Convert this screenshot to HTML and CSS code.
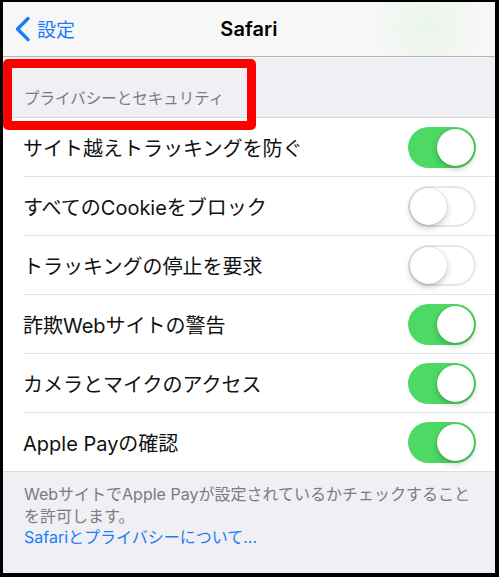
FILE: index.html
```html
<!DOCTYPE html>
<html lang="ja">
<head>
  <meta charset="utf-8">
  <title>Safari</title>
  <link rel="stylesheet" href="styles.css">
</head>
<body>
  <div class="frame">
    <header class="navbar">
      <a class="back" href="#">
        <svg class="chevron" width="17" height="26" viewBox="0 0 17 26">
          <polyline points="14,2.5 3.5,13 14,23.5" fill="none" stroke="#1a7cf7" stroke-width="3.4" stroke-linecap="round" stroke-linejoin="round"/>
        </svg>
        <span>設定</span>
      </a>
      <h1 class="title">Safari</h1>
      <span></span>
    </header>

    <div class="group-header">
      <span>プライバシーとセキュリティ</span>
      <div class="highlight"></div>
    </div>

    <ul class="list">
      <li class="row"><span class="label">サイト越えトラッキングを防ぐ</span><span class="switch on"></span></li>
      <li class="row"><span class="label">すべてのCookieをブロック</span><span class="switch"></span></li>
      <li class="row"><span class="label">トラッキングの停止を要求</span><span class="switch"></span></li>
      <li class="row"><span class="label">詐欺Webサイトの警告</span><span class="switch on"></span></li>
      <li class="row"><span class="label">カメラとマイクのアクセス</span><span class="switch on"></span></li>
      <li class="row"><span class="label">Apple Payの確認</span><span class="switch on"></span></li>
    </ul>

    <div class="group-footer">
      <p>WebサイトでApple Payが設定されているかチェックすることを許可します。</p>
      <a class="link" href="#">Safariとプライバシーについて...</a>
    </div>
  </div>
</body>
</html>
```

FILE: styles.css
```css
body {
  margin: 0;
  font-family: "Inter", "Noto Sans CJK JP", sans-serif;
  background-color: #000000;
}

.frame {
  width: 499px;
  height: 577px;
  box-sizing: border-box;
  border-style: solid;
  border-color: #000000;
  border-width: 2px 4px 4px 3px;
  background-color: #efeff4;
  overflow: hidden;
}

/* top navigation bar */
.navbar {
  height: 54px;
  display: grid;
  grid-template-columns: 1fr auto 1fr;
  align-items: center;
  background-color: #f7f7f7;
  background-image: radial-gradient(circle at 425px 24px, rgba(226, 244, 226, 0.6), rgba(247, 247, 247, 0) 60px);
  border-bottom: 1px solid #b5b5b8;
}

.back {
  display: flex;
  align-items: center;
  gap: 6px;
  padding-left: 11px;
  color: #1a7cf7;
  text-decoration: none;
  font-size: 19px;
}

.back span {
  margin-top: -1px;
}

.title {
  margin: 0;
  font-size: 20px;
  font-weight: 600;
  color: #000000;
  letter-spacing: 0.1px;
}

/* section header */
.group-header {
  position: relative;
  height: 61px;
  box-sizing: border-box;
  display: flex;
  align-items: flex-end;
  padding: 0 21px 9px;
  border-bottom: 1px solid #d6d6da;
  font-size: 15.5px;
  color: #7b7b80;
}

.highlight {
  position: absolute;
  left: 0;
  top: 2px;
  width: 253px;
  height: 71px;
  box-sizing: border-box;
  border: 9px solid #ff0000;
  border-radius: 5px;
}

/* toggle rows */
.list {
  margin: 0;
  padding: 0 0 0 20px;
  list-style: none;
  background-color: #ffffff;
  border-bottom: 1px solid #dcdce0;
}

.row {
  height: 58px;
  display: flex;
  align-items: center;
  justify-content: space-between;
  padding-right: 19px;
  border-bottom: 1px solid #e2e2e4;
}

.row:last-child {
  border-bottom: none;
}

.label {
  font-size: 20px;
  color: #111111;
}

.switch {
  width: 68px;
  height: 41px;
  box-sizing: border-box;
  display: flex;
  align-items: center;
  padding: 2px;
  border-radius: 21px;
  background-color: #ffffff;
  box-shadow: inset 0 0 0 2px #e6e6e8;
}

.switch::after {
  content: "";
  width: 37px;
  height: 37px;
  border-radius: 50%;
  background-color: #ffffff;
  box-shadow: 0 3px 6px rgba(0, 0, 0, 0.22), 0 0 0 0.5px rgba(0, 0, 0, 0.12);
}

.switch.on {
  justify-content: flex-end;
  background-color: #4cd964;
  box-shadow: none;
}

/* footer note */
.group-footer {
  padding: 12px 22px 0 21px;
  font-size: 16px;
  line-height: 21.5px;
  color: #7b7b80;
}

.group-footer p {
  margin: 0;
}

.link {
  color: #1a7cf7;
  text-decoration: none;
}
```
